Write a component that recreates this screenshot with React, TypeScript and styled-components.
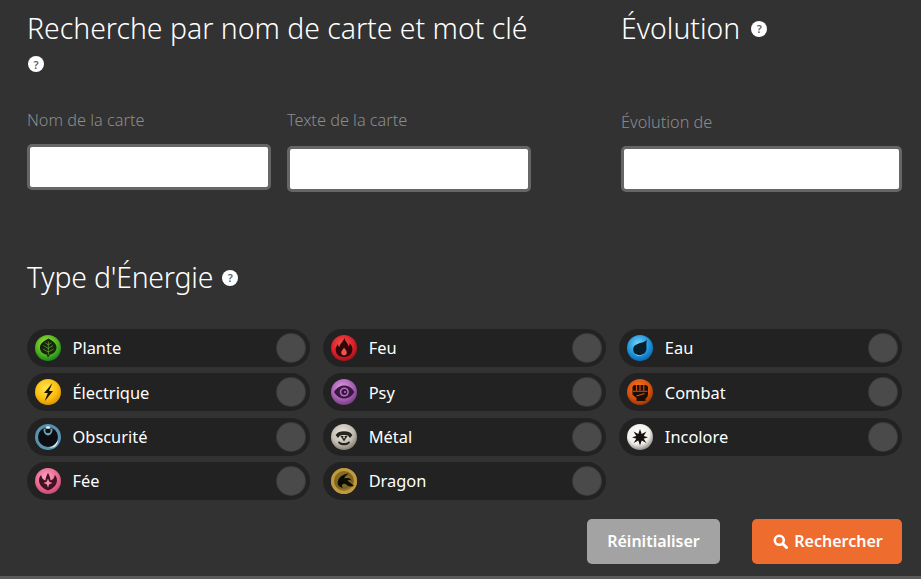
import React from "react";
import styled, { createGlobalStyle } from "styled-components";

const Global = createGlobalStyle`
  html, body { margin: 0; padding: 0; background: #323232; }
  body { font-family: "Noto Sans", "Open Sans", sans-serif; overflow: hidden; }
  * { box-sizing: border-box; }
`;

const Page = styled.main`
  width: 921px;
  height: 579px;
  padding: 10px 19px 0 27px;
  background: #323232;
  border-bottom: 3px solid #5a5a5a;
  color: #fff;
  overflow: hidden;
`;

const TopRow = styled.div`
  display: grid;
  grid-template-columns: 504px 281px;
  justify-content: space-between;
`;

const Section = styled.section``;

const Title = styled.h2`
  margin: 0;
  font-size: 28.4px;
  line-height: 36px;
  font-weight: 300;
  color: #fff;
  white-space: nowrap;
`;

const Help = styled.span<{ $gap?: number }>`
  display: inline-flex;
  align-items: center;
  justify-content: center;
  width: 16px;
  height: 16px;
  margin-left: ${(p) => p.$gap ?? 11}px;
  border-radius: 50%;
  background: #fff;
  color: #5f5f5f;
  font-size: 11px;
  font-weight: 600;
  line-height: 1;
  vertical-align: 6px;
`;

const HelpLine = styled.div`
  height: 36px;
  display: flex;
  align-items: center;
  padding-left: 1px;
`;

const Fields = styled.div<{ $top: number }>`
  display: flex;
  gap: 16px;
  margin-top: ${(p) => p.$top}px;
`;

const Field = styled.label<{ $width: number; $gap: number }>`
  display: flex;
  flex-direction: column;
  gap: ${(p) => p.$gap}px;
  width: ${(p) => p.$width}px;
`;

const FieldLabel = styled.span`
  font-size: 16.3px;
  line-height: 18px;
  font-weight: 300;
  color: #8c8c8c;
`;

const Input = styled.input`
  display: block;
  width: 100%;
  height: 46px;
  padding: 0 8px;
  background: #fff;
  border: 3px solid #666;
  border-radius: 5px;
  outline: none;
`;

const EnergyTitle = styled(Title)`
  margin-top: 67px;
  letter-spacing: -0.2px;
`;

const EnergyGrid = styled.div`
  display: grid;
  grid-template-columns: repeat(3, 1fr);
  column-gap: 13.5px;
  row-gap: 6.33px;
  margin-top: 34px;
`;

const EnergyRow = styled.div`
  display: flex;
  align-items: center;
  height: 38px;
  padding: 0 5px 0 8px;
  border-radius: 19px;
  background: #222;
`;

const EnergyIcon = styled.svg`
  flex: none;
  width: 26px;
  height: 26px;
`;

const EnergyName = styled.span`
  flex: 1;
  margin: 0.6px 0 0 11.5px;
  font-size: 16.4px;
  line-height: 20px;
  font-weight: 400;
  color: #fff;
`;

const Toggle = styled.span`
  flex: none;
  width: 28px;
  height: 28px;
  border-radius: 50%;
  background: #4a4a4a;
  box-shadow: 0 0 0 1px #3a3a3a;
`;

const Actions = styled.div`
  display: flex;
  justify-content: flex-end;
  gap: 32px;
  margin-top: 19px;
`;

const Button = styled.button<{ $primary?: boolean; $width: number }>`
  display: flex;
  align-items: center;
  justify-content: center;
  gap: 6px;
  width: ${(p) => p.$width}px;
  height: 45px;
  padding: 0 0 0 ${(p) => (p.$primary ? 2 : 0)}px;
  border: 0;
  border-radius: 5px;
  background: ${(p) => (p.$primary ? "#ef6c2f" : "#a3a3a3")};
  color: #fff;
  font-family: inherit;
  font-size: 16px;
  font-weight: 600;
`;

type Energy = {
  id: string;
  name: string;
  stops: [string, string, string];
  glyph: React.ReactNode;
};

const energies: Energy[] = [
  {
    id: "plante", name: "Plante", stops: ["#b4e83c", "#4fb41f", "#127a20"],
    glyph: (
      <>
        <path d="M13.500 3.500c3 2 7.500 3.800 8 8.500.3 4.200-3 7-6.500 7.500L13 22.500l-1.500-3C7.800 19 4.500 16.200 5 12c.5-4.700 5.500-6.500 8.500-8.500z" fill="#14240f" />
        <path d="M13.300 6.500V20M13.300 10l-3-2.200M13.300 10l3-2.200M13.300 13.500L8.500 10.500M13.300 13.500l4.800-3M13.300 17L8 14M13.300 17l5.300-3" stroke="#6fae2a" strokeWidth=".7" fill="none" />
      </>
    ),
  },
  {
    id: "feu", name: "Feu", stops: ["#f0574f", "#dc2028", "#96101a"],
    glyph: (
      <>
        <path d="M13.500 3c.8 3.800 3.500 5 4 8.500 1-.8 1.300-2 1.200-3.300 2.500 2.500 3.500 5.600 2.300 8.800-1 2.700-3.500 5-8 5s-7-2.300-8-5c-1-3 0-5.500 2-8 0 1.400.5 2.400 1.500 3.200C8.200 9.500 12 7 13.500 3z" fill="#33050a" />
        <path d="M13 12.500c.9 2 3 2.900 2.800 5.400-.2 1.500-1.400 2.400-2.800 2.400s-2.600-.9-2.800-2.400c-.2-2.300 2-3.300 2.800-5.400z" fill="#e9574c" />
      </>
    ),
  },
  {
    id: "eau", name: "Eau", stops: ["#7cd8f8", "#1c94dc", "#0a62ae"],
    glyph: (
      <>
        <path d="M20 5c-1.100 3.200-.3 5.800-.5 8.500-.3 4-3.300 6.700-7.200 6.700-3.400 0-6.100-2.400-6.100-5.600 0-3.400 2.700-5 5.400-6C14.700 7.400 17.700 7.100 20 5z" fill="#0a1e2c" />
        <path d="M8 18.800c2.800 1.800 6.500 1.800 9-.2-1.800 2.700-7 3.200-9 .2z" fill="#9fe3f7" />
      </>
    ),
  },
  {
    id: "electrique", name: "Électrique", stops: ["#ffe84f", "#fcbd0e", "#d68d05"],
    glyph: <path d="M17.500 4L9 14h3.800L9.500 22.500 18 12h-4l3.500-8z" fill="#1a1508" />,
  },
  {
    id: "psy", name: "Psy", stops: ["#e0a4dc", "#a860b4", "#6f3880"],
    glyph: (
      <>
        <path d="M3 13C6 8 10 6.500 13.300 6.500c3.600 0 7.500 2 10 6.500-2.500 4.500-6.400 6.500-10 6.500C10 19.500 6 18 3 13z" fill="#3a1742" />
        <circle cx="13.300" cy="13" r="4.600" fill="#b26fbe" />
        <circle cx="13.300" cy="13" r="3" fill="#3a1742" />
        <circle cx="14" cy="13" r="1.100" fill="#b26fbe" />
      </>
    ),
  },
  {
    id: "combat", name: "Combat", stops: ["#f27a22", "#d8520e", "#963205"],
    glyph: (
      <>
        <path d="M5.500 8.500c0-1.500 1.200-2.500 2.500-2.500h10.500c1.400 0 2.500 1 2.500 2.500v6.200c0 2.300-.8 3.800-2.500 4.800v2.500H9.500v-3l-4-3.200V8.500z" fill="#1d0d06" />
        <path d="M9.500 6v5.500M13 6v5.500M16.800 6v5.500M6 12.200h14.500M9.500 17l8-2.500" stroke="#d6530f" strokeWidth="1.100" fill="none" />
      </>
    ),
  },
  {
    id: "obscurite", name: "Obscurité", stops: ["#0d0e11", "#0d0e11", "#0d0e11"],
    glyph: (
      <>
        <circle cx="13" cy="13" r="11.500" fill="none" stroke="#5a93ad" strokeWidth="3" />
        <path d="M8.500 4.500c-.4 4 2 7 4.500 7s4.900-3 4.500-7" fill="#6f9fb5" />
        <circle cx="13" cy="6.500" r="2.600" fill="#0d0e11" />
        <path d="M14 23.500c4-.5 7.300-3.500 8.800-7.500.7 5-3.800 8.700-8.800 7.500z" fill="#e0eef4" />
        <path d="M10.500 3.200a3 2.200 0 0 1 5 0l-1 1.600h-3z" fill="#e0eef4" />
      </>
    ),
  },
  {
    id: "metal", name: "Métal", stops: ["#efece4", "#c2bcb0", "#7a756a"],
    glyph: (
      <>
        <path d="M7 8.500c3.800-1.600 8.200-1.600 12 0l2.500 2.500-2.500 3-1.800-2.300c-2.700-.9-5.700-.9-8.400 0L7 14l-2.500-3L7 8.500z" fill="#26231e" />
        <path d="M9.500 12h7L13 17.500z" fill="#26231e" />
        <circle cx="13" cy="13.300" r="1.100" fill="#c9c4b9" />
        <path d="M8 17c1.500 2.700 8.500 2.700 10 0l1 1.700c-2.300 3.400-9.700 3.400-12 0z" fill="#26231e" />
      </>
    ),
  },
  {
    id: "incolore", name: "Incolore", stops: ["#ffffff", "#f2efea", "#827d79"],
    glyph: (
      <path d="M13 5l1.700 5.100 4.700-2.600-2.700 4.500 4.300 1.300-4.300 1.400 2.700 4.400-4.700-2.600-1.700 5.100-1.700-5.100-4.700 2.600 2.700-4.400-4.300-1.400 4.300-1.300-2.700-4.500 4.700 2.600z" fill="#15110f" />
    ),
  },
  {
    id: "fee", name: "Fée", stops: ["#f9a8c4", "#ea6a93", "#c04672"],
    glyph: (
      <>
        <path d="M13 22.500c-4.800-1.800-9-5.200-9-10.300 0-2.200.8-4 2.200-5.200.3 3 2 5 4.300 5.500.1-2.800 1-5 2.500-7.500 1.500 2.500 2.400 4.700 2.500 7.500 2.300-.5 4-2.500 4.300-5.500 1.400 1.200 2.200 3 2.200 5.200 0 5.100-4.200 8.500-9 10.300z" fill="#43121f" />
        <path d="M13 10.500l1.300 3.200 3.200 1.300-3.200 1.300-1.300 3.200-1.300-3.200-3.200-1.300 3.200-1.300z" fill="#f28cae" />
      </>
    ),
  },
  {
    id: "dragon", name: "Dragon", stops: ["#8a7226", "#7a6420", "#c9a23e"],
    glyph: (
      <>
        <circle cx="13" cy="13" r="11.500" fill="none" stroke="#c09a3c" strokeWidth="3" />
        <path d="M22.500 18c-2.500 1-5.200.5-7-1.200-1.300-1.200-3.200-1.300-4.200-.2-.8.900-.5 2.200.7 3.100-4-.3-6.300-3.500-5-7C8 9 12.500 5.700 18 5.500c-2.800 1.500-4.500 3.200-4.700 5 3-1 6-.2 7.500 2-1.800-.8-3.500-.7-4.500.1 1.800 1.600 4.500 3 6.700 5.400z" fill="#0e0b04" />
      </>
    ),
  },
];

function Icon({ energy }: { energy: Energy }) {
  const gid = `grad-${energy.id}`;
  return (
    <EnergyIcon viewBox="0 0 26 26" aria-hidden="true">
      <defs>
        <radialGradient id={gid} cx="44%" cy="36%" r="68%">
          <stop offset="0%" stopColor={energy.stops[0]} />
          <stop offset="62%" stopColor={energy.stops[1]} />
          <stop offset="100%" stopColor={energy.stops[2]} />
        </radialGradient>
      </defs>
      <circle cx="13" cy="13" r="13" fill={`url(#${gid})`} />
      {energy.glyph}
    </EnergyIcon>
  );
}

const SearchIcon = () => (
  <svg width="15" height="15" viewBox="0 0 15 15" aria-hidden="true">
    <circle cx="6.300" cy="6.300" r="4.500" fill="none" stroke="#fff" strokeWidth="2.600" />
    <path d="M9.800 9.800l3.700 3.700" stroke="#fff" strokeWidth="3" strokeLinecap="round" />
  </svg>
);

export default function App() {
  return (
    <>
      <Global />
      <Page>
        <TopRow>
          <Section>
            <Title>Recherche par nom de carte et mot clé</Title>
            <HelpLine>
              <Help $gap={0}>?</Help>
            </HelpLine>
            <Fields $top={29}>
              <Field $width={244} $gap={15}>
                <FieldLabel>Nom de la carte</FieldLabel>
                <Input />
              </Field>
              <Field $width={244} $gap={17}>
                <FieldLabel>Texte de la carte</FieldLabel>
                <Input />
              </Field>
            </Fields>
          </Section>
          <Section>
            <Title>
              Évolution<Help>?</Help>
            </Title>
            <Fields $top={67}>
              <Field $width={281} $gap={15}>
                <FieldLabel>Évolution de</FieldLabel>
                <Input />
              </Field>
            </Fields>
          </Section>
        </TopRow>
        <EnergyTitle>
          Type d'Énergie<Help $gap={9}>?</Help>
        </EnergyTitle>
        <EnergyGrid>
          {energies.map((energy) => (
            <EnergyRow key={energy.id}>
              <Icon energy={energy} />
              <EnergyName>{energy.name}</EnergyName>
              <Toggle />
            </EnergyRow>
          ))}
        </EnergyGrid>
        <Actions>
          <Button $width={133}>Réinitialiser</Button>
          <Button $width={150} $primary>
            <SearchIcon />
            Rechercher
          </Button>
        </Actions>
      </Page>
    </>
  );
}
